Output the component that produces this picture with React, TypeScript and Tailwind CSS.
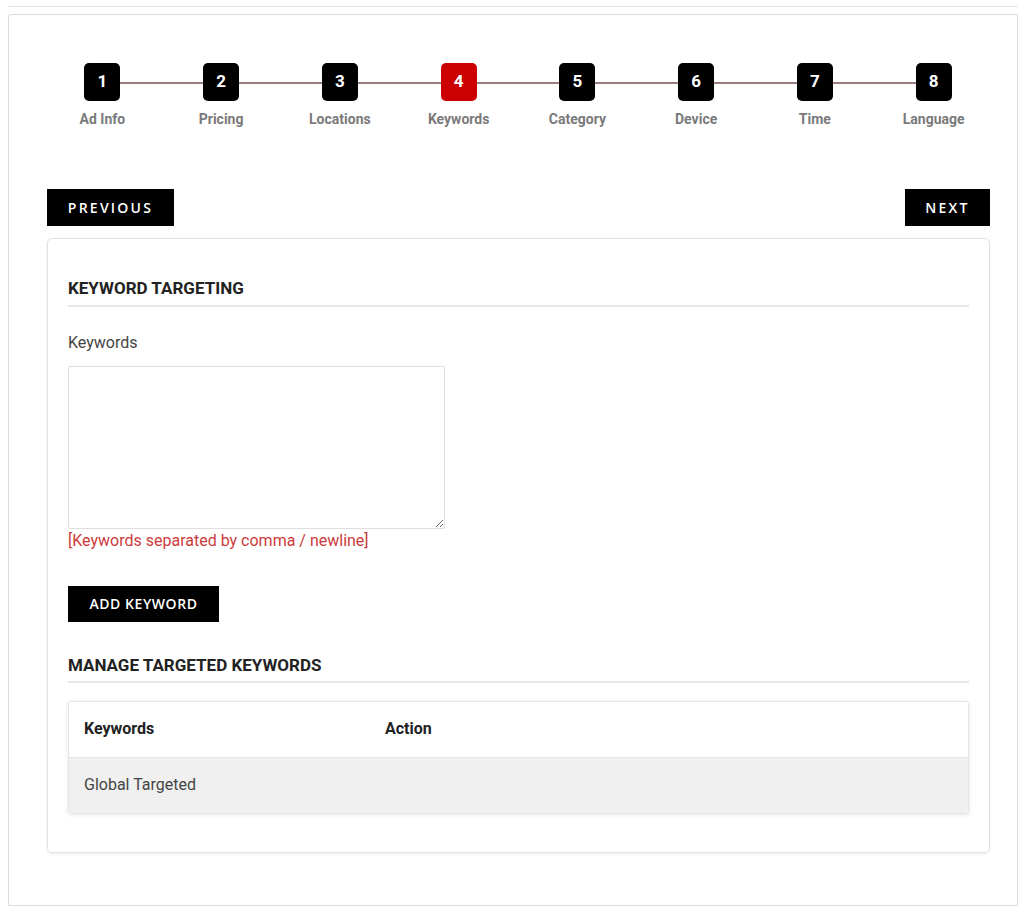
import { useState } from "react";

const steps = ["Ad Info", "Pricing", "Locations", "Keywords", "Category", "Device", "Time", "Language"];

export default function App() {
  const [keywords, setKeywords] = useState("");
  const active = 4;

  return (
    <div className="w-[1024px] h-[912px] bg-white pt-[6px] pl-[8px] pr-[6px] font-['Roboto',sans-serif]">
      <div className="h-px bg-[#e6e6e6]" />
      <div className="mt-[7px] h-[892px] rounded-tl-[3px] border border-[#dcdcdc] pl-[38px] pr-[27px] pt-[48px]">
        {/* Step wizard */}
        <div className="relative -ml-[4px] grid grid-cols-8 w-[950px]">
          <div className="absolute left-[59px] right-[59px] top-[19px] h-[2px] bg-[#9a7d7d]" />
          {steps.map((label, i) => (
            <div key={label} className="relative flex flex-col items-center">
              <div
                className={`w-[36px] h-[38px] rounded-[5px] flex items-center justify-center text-white text-[17px] font-bold ${
                  i + 1 === active ? "bg-[#cc0000]" : "bg-black"
                }`}
              >
                {i + 1}
              </div>
              <span className="mt-[8px] text-[14px] font-bold text-[#7a7a7a]">{label}</span>
            </div>
          ))}
        </div>

        {/* Prev / Next */}
        <div className="mt-[59px] flex justify-between">
          <button className="h-[37px] w-[127px] bg-black text-white text-[14px] font-semibold tracking-[0.16em] font-['Open_Sans',sans-serif]">
            PREVIOUS
          </button>
          <button className="h-[37px] w-[85px] bg-black text-white text-[14px] font-semibold tracking-[0.16em] font-['Open_Sans',sans-serif]">
            NEXT
          </button>
        </div>

        {/* Card */}
        <div className="mt-[12px] h-[615px] rounded-[5px] border border-[#e2e2e2] shadow-[0_1px_3px_rgba(0,0,0,0.08)] px-[20px] pt-[37px]">
          <h2 className="text-[17px] font-bold text-[#222] pb-[3px] border-b-2 border-[#e6e6e6]">KEYWORD TARGETING</h2>

          <label className="block mt-[24px] text-[16px] text-[#444]">Keywords</label>
          <textarea
            value={keywords}
            onChange={(e) => setKeywords(e.target.value)}
            className="mt-[11px] block w-[377px] h-[163px] border border-[#dedede] rounded-[2px] p-2 text-[14px] outline-none"
          />
          <p className="mt-[0px] text-[16px] text-[#cc3b3b]">[Keywords separated by comma / newline]</p>

          <button className="mt-[33px] h-[36px] w-[151px] bg-black text-white text-[14px] font-semibold tracking-[0.04em] font-['Open_Sans',sans-serif]">
            ADD KEYWORD
          </button>

          <h2 className="mt-[31px] text-[17px] font-bold text-[#222] pb-[3px] border-b-2 border-[#e6e6e6]">
            MANAGE TARGETED KEYWORDS
          </h2>

          <div className="mt-[18px] rounded-[3px] border border-[#e4e4e4] shadow-[0_1px_4px_rgba(0,0,0,0.1)] overflow-hidden">
            <table className="w-full text-left">
              <thead>
                <tr className="h-[55px] bg-white">
                  <th className="pl-[15px] w-[316px] text-[16px] font-bold text-[#222]">Keywords</th>
                  <th className="text-[16px] font-bold text-[#222]">Action</th>
                </tr>
              </thead>
              <tbody>
                <tr className="h-[56px] bg-[#f0f0f0] border-t border-[#e6e6e6]">
                  <td className="pl-[15px] text-[16px] text-[#444]">Global Targeted</td>
                  <td />
                </tr>
              </tbody>
            </table>
          </div>
        </div>
      </div>
    </div>
  );
}
